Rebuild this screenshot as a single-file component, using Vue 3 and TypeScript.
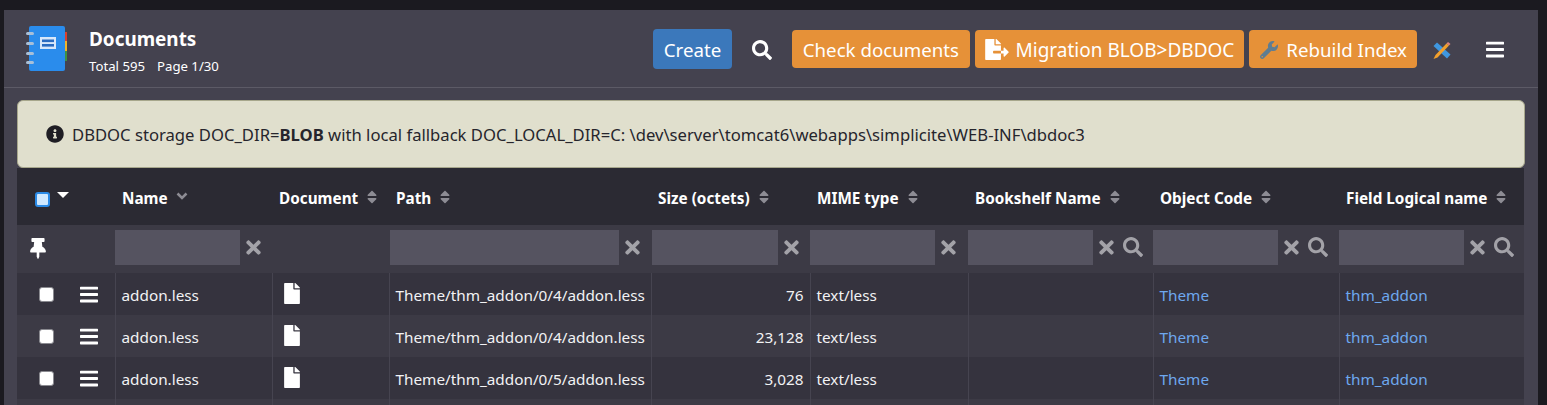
<template>
  <div class="page">
    <div class="panel">
      <header class="head">
        <svg class="logo" viewBox="0 0 40 45">
          <rect x="35" y="6" width="4" height="10" fill="#d9402f" />
          <rect x="35" y="15" width="4" height="10" fill="#f0b429" />
          <rect x="35" y="25" width="4" height="10" fill="#3f9142" />
          <rect x="1" y="0" width="36" height="45" rx="2" fill="#2a8cec" />
          <rect x="12" y="11" width="16" height="12" fill="#d7e8fa" />
          <rect x="14" y="13.500" width="12" height="2.600" fill="#2a6cc0" />
          <rect x="14" y="18" width="12" height="2.600" fill="#2a6cc0" />
          <rect v-for="y in [6, 16, 26, 35]" :key="y" x="-2" :y="y" width="8" height="3" rx="1.500" fill="#a9c0d8" />
        </svg>
        <div class="title-box">
          <div class="title">Documents</div>
          <div class="sub"><span>Total 595</span><span>Page 1/30</span></div>
        </div>
        <div class="actions">
          <button class="btn blue">Create</button>
          <svg class="search-top" :viewBox="icons.search.vb"><path :d="icons.search.d" /></svg>
          <button class="btn orange check">Check documents</button>
          <button class="btn orange migrate">
            <svg class="btn-ico" :viewBox="icons.fileExport.vb"><path :d="icons.fileExport.d" /></svg>
            Migration BLOB&gt;DBDOC
          </button>
          <button class="btn orange rebuild">
            <svg class="btn-ico wrench" :viewBox="icons.wrench.vb"><path :d="icons.wrench.d" /></svg>
            Rebuild Index
          </button>
          <svg class="tools" viewBox="0 0 18 18">
            <path d="M0.500 5 4 1.500 17.500 13.500 14 17.500Z" fill="#3f97e0" />
            <path d="M2.500 14 13.500 2.500 16 4.500 4.500 16.500 0.500 18Z" fill="#f2a02c" />
            <path d="M13.500 2.500 15 1 17.500 3 16 4.500Z" fill="#e0847a" />
          </svg>
          <svg class="bars-top" :viewBox="icons.bars.vb"><path :d="icons.bars.d" /></svg>
        </div>
      </header>

      <div class="alert">
        <svg class="info" :viewBox="icons.info.vb"><path :d="icons.info.d" /></svg>
        <span>DBDOC storage DOC_DIR=<b>BLOB</b> with local fallback DOC_LOCAL_DIR=C: \dev\server\tomcat6\webapps\simplicite\WEB-INF\dbdoc3</span>
      </div>

      <table class="grid">
        <colgroup>
          <col v-for="(w, i) in colWidths" :key="i" :style="{ width: w + 'px' }" />
        </colgroup>
        <thead>
          <tr class="titles">
            <th>
              <div class="sel-head">
                <span class="check-all"></span>
                <span class="caret"></span>
              </div>
            </th>
            <th v-for="c in columns" :key="c.label">
              <div class="th-in">
                {{ c.label }}
                <svg v-if="c.sorted" class="chev" viewBox="0 0 12 8"><path d="M1.500 1.500 6 6l4.500-4.500" /></svg>
                <svg v-else class="sort" :viewBox="icons.sort.vb"><path :d="icons.sort.d" /></svg>
              </div>
            </th>
          </tr>
          <tr class="filters">
            <th>
              <svg class="pin" :viewBox="icons.pin.vb"><path :d="icons.pin.d" /></svg>
            </th>
            <th v-for="c in columns" :key="c.label">
              <div v-if="c.input" class="filter" :class="{ nudged: c.nudged }">
                <input class="box" type="text" :style="{ width: c.input + 'px' }" />
                <svg class="clear" :viewBox="icons.times.vb"><path :d="icons.times.d" /></svg>
                <svg v-if="c.lookup" class="lookup" :viewBox="icons.search.vb"><path :d="icons.search.d" /></svg>
              </div>
            </th>
          </tr>
        </thead>
        <tbody>
          <tr v-for="(r, i) in rows" :key="i">
            <td>
              <div class="sel-row">
                <span class="check-row"></span>
                <svg class="bars" :viewBox="icons.bars.vb"><path :d="icons.bars.d" /></svg>
              </div>
            </td>
            <td>addon.less</td>
            <td class="doc"><svg class="file" :viewBox="icons.file.vb"><path :d="icons.file.d" /></svg></td>
            <td>{{ r.path }}</td>
            <td class="num">{{ r.size }}</td>
            <td>text/less</td>
            <td></td>
            <td class="link">Theme</td>
            <td class="link">thm_addon</td>
          </tr>
          <tr>
            <td v-for="w in colWidths" :key="w"></td>
          </tr>
        </tbody>
      </table>
    </div>
  </div>
</template>

<script setup lang="ts">
interface Column {
  label: string;
  sorted?: boolean;
  input?: number;
  lookup?: boolean;
  nudged?: boolean;
}

const icons = {
  search: {
    vb: "0 0 512 512",
    d: "M505 442.7L405.3 343c-4.500-4.500-10.600-7-17-7H372c27.600-35.300 44-79.700 44-128C416 93.100 322.900 0 208 0S0 93.100 0 208s93.100 208 208 208c48.300 0 92.700-16.400 128-44v16.300c0 6.400 2.500 12.500 7 17l99.700 99.700c9.400 9.400 24.600 9.400 33.900 0l28.300-28.300c9.400-9.400 9.400-24.600.1-34zM208 336c-70.700 0-128-57.200-128-128 0-70.700 57.200-128 128-128 70.700 0 128 57.200 128 128 0 70.700-57.200 128-128 128z",
  },
  times: {
    vb: "0 0 352 512",
    d: "M242.720 256l100.070-100.070c12.280-12.280 12.280-32.190 0-44.480l-22.240-22.240c-12.280-12.280-32.190-12.280-44.480 0L176 189.280 75.930 89.210c-12.280-12.280-32.190-12.280-44.480 0L9.210 111.450c-12.280 12.280-12.280 32.190 0 44.480L109.280 256 9.210 356.070c-12.280 12.280-12.280 32.190 0 44.480l22.240 22.240c12.280 12.280 32.200 12.280 44.480 0L176 322.720l100.070 100.070c12.280 12.280 32.200 12.280 44.480 0l22.240-22.240c12.280-12.280 12.280-32.190 0-44.480L242.720 256z",
  },
  bars: {
    vb: "0 0 448 512",
    d: "M16 132h416c8.837 0 16-7.163 16-16V76c0-8.837-7.163-16-16-16H16C7.163 60 0 67.163 0 76v40c0 8.837 7.163 16 16 16zm0 160h416c8.837 0 16-7.163 16-16v-40c0-8.837-7.163-16-16-16H16c-8.837 0-16 7.163-16 16v40c0 8.837 7.163 16 16 16zm0 160h416c8.837 0 16-7.163 16-16v-40c0-8.837-7.163-16-16-16H16c-8.837 0-16 7.163-16 16v40c0 8.837 7.163 16 16 16z",
  },
  file: {
    vb: "0 0 384 512",
    d: "M224 136V0H24C10.700 0 0 10.700 0 24v464c0 13.300 10.700 24 24 24h336c13.300 0 24-10.700 24-24V160H248c-13.200 0-24-10.800-24-24zm160-14.100v6.100H256V0h6.100c6.400 0 12.500 2.500 17 7l97.900 98c4.500 4.500 7 10.600 7 16.900z",
  },
  pin: {
    vb: "0 0 384 512",
    d: "M298.028 214.267L285.793 96H328c13.255 0 24-10.745 24-24V24c0-13.255-10.745-24-24-24H56C42.745 0 32 10.745 32 24v48c0 13.255 10.745 24 24 24h42.207L85.972 214.267C37.465 236.820 0 277.261 0 328c0 13.255 10.745 24 24 24h136v104.007c0 1.242.289 2.467.845 3.578l24 48c2.941 5.882 11.364 5.893 14.311 0l24-48a8.008 8.008 0 0 0 .845-3.578V352h136c13.255 0 24-10.745 24-24-.001-51.183-37.983-91.420-85.973-113.733z",
  },
  info: {
    vb: "0 0 512 512",
    d: "M256 8C119.043 8 8 119.083 8 256c0 136.997 111.043 248 248 248s248-111.003 248-248C504 119.083 392.957 8 256 8zm0 110c23.196 0 42 18.804 42 42s-18.804 42-42 42-42-18.804-42-42 18.804-42 42-42zm56 254c0 6.627-5.373 12-12 12h-88c-6.627 0-12-5.373-12-12v-24c0-6.627 5.373-12 12-12h12v-64h-12c-6.627 0-12-5.373-12-12v-24c0-6.627 5.373-12 12-12h64c6.627 0 12 5.373 12 12v100h12c6.627 0 12 5.373 12 12v24z",
  },
  fileExport: {
    vb: "0 0 576 512",
    d: "M384 121.900c0-6.300-2.500-12.400-7-16.900L279.100 7c-4.500-4.500-10.600-7-17-7H256v128h128zM571 308l-95.700-96.400c-10.100-10.100-27.400-3-27.400 11.300V288h-64v64h64v65.200c0 14.300 17.300 21.400 27.400 11.300L571 332c6.600-6.600 6.600-17.400 0-24zm-379 28v-32c0-8.800 7.200-16 16-16h176V160H248c-13.200 0-24-10.800-24-24V0H24C10.700 0 0 10.700 0 24v464c0 13.300 10.700 24 24 24h336c13.300 0 24-10.700 24-24V352H208c-8.800 0-16-7.200-16-16z",
  },
  wrench: {
    vb: "0 0 512 512",
    d: "M507.730 109.100c-2.240-9.030-13.540-12.090-20.120-5.510l-74.360 74.360-67.880-11.310-11.310-67.880 74.360-74.360c6.620-6.620 3.430-17.900-5.660-20.160-47.380-11.740-99.550.91-136.580 37.930-39.640 39.640-50.550 97.100-34.050 147.200L18.740 402.760c-24.990 24.990-24.990 65.510 0 90.500 24.990 24.990 65.510 24.990 90.500 0l213.210-213.210c50.120 16.710 107.470 5.680 147.370-34.220 37.070-37.070 49.700-89.320 37.910-136.730zM64 472c-13.250 0-24-10.750-24-24 0-13.260 10.750-24 24-24s24 10.740 24 24c0 13.250-10.750 24-24 24z",
  },
  sort: {
    vb: "0 0 320 512",
    d: "M41 288h238c21.400 0 32.100 25.900 17 41L177 448c-9.400 9.400-24.600 9.400-33.900 0L24 329c-15.100-15.100-4.400-41 17-41zm255-105L177 64c-9.400-9.400-24.600-9.400-33.900 0L24 183c-15.100 15.100-4.400 41 17 41h238c21.400 0 32.100-25.900 17-41z",
  },
};

const colWidths = [98, 157, 117, 262, 159, 158, 185, 186, 185];

const columns: Column[] = [
  { label: "Name", sorted: true, input: 125 },
  { label: "Document" },
  { label: "Path", input: 229, nudged: true },
  { label: "Size (octets)", input: 126, nudged: true },
  { label: "MIME type", input: 125 },
  { label: "Bookshelf Name", input: 125, lookup: true },
  { label: "Object Code", input: 125, lookup: true },
  { label: "Field Logical name", input: 125, lookup: true },
];

const rows = [
  { path: "Theme/thm_addon/0/4/addon.less", size: "76" },
  { path: "Theme/thm_addon/0/4/addon.less", size: "23,128" },
  { path: "Theme/thm_addon/0/5/addon.less", size: "3,028" },
];
</script>

<style>
html,
body {
  height: 405px;
  overflow: hidden;
  background: #1b1a20;
}
</style>

<style scoped>
.page {
  padding: 10px 9px 0 4px;
  font-family: "Noto Sans", sans-serif;
  color: #fff;
}

.panel {
  height: 395px;
  padding: 0 13px;
  overflow: hidden;
  background: #44424f;
}

.head {
  display: flex;
  align-items: center;
  height: 77px;
  margin: 0 -13px;
  padding: 0 34px 0 24px;
  border-bottom: 1px solid #5c5a66;
}

.logo {
  width: 40px;
  height: 45px;
  overflow: visible;
}

.title-box {
  margin: 3px 0 0 21px;
}

.title {
  font-size: 18.900px;
  font-weight: 700;
  line-height: 26px;
}

.sub {
  display: flex;
  gap: 12px;
  margin-top: 6px;
  font-size: 13.200px;
  line-height: 17px;
}

.actions {
  display: flex;
  align-items: center;
  margin-left: auto;
}

.btn {
  display: flex;
  align-items: center;
  gap: 7px;
  height: 38px;
  margin-left: 5px;
  padding: 2px 10px 0;
  border: 0;
  border-radius: 4px;
  font-family: inherit;
  font-size: 18.700px;
  color: #fff;
  white-space: nowrap;
}

.blue {
  height: 40px;
  margin-left: 0;
  padding: 2px 11px 0;
  background: #3b78bb;
}

.orange {
  background: #e69138;
}

.check {
  margin-left: 20px;
  padding: 2px 10.500px 0;
}

.migrate {
  font-size: 19px;
}

.rebuild {
  gap: 8px;
  padding-left: 11px;
}

.search-top {
  width: 20px;
  height: 20px;
  margin: 2px 0 0 20px;
  fill: #fff;
}

.btn-ico {
  width: 24px;
  height: 21px;
  fill: #fff;
}

.btn-ico.wrench {
  width: 18px;
  height: 18px;
  fill: #5f7d92;
}

.tools {
  width: 18px;
  height: 18px;
  margin-left: 16px;
  margin-top: 2px;
}

.bars-top {
  width: 18px;
  height: 21px;
  margin: 2px 0 0 35px;
  fill: #fff;
}

.alert {
  display: flex;
  align-items: center;
  gap: 8px;
  box-sizing: border-box;
  height: 68px;
  margin: 12px 0 0;
  padding-left: 28px;
  border: 1px solid #a7a78c;
  border-radius: 6px;
  background: #e0dfcd;
  font-size: 16.650px;
  color: #26252c;
}

.info {
  width: 18px;
  height: 18px;
  fill: #1f1e24;
}

.grid {
  width: 1507px;
  table-layout: fixed;
  border-collapse: collapse;
}

.grid th,
.grid td {
  box-sizing: border-box;
  padding: 0;
  text-align: left;
}

.titles th {
  height: 57px;
  padding: 2px 0 0 7px;
  background: #2b2a33;
  font-size: 15.300px;
  font-weight: 700;
}

.th-in {
  display: flex;
  align-items: center;
  gap: 8px;
  white-space: nowrap;
}

.sel-head {
  display: flex;
  align-items: center;
  gap: 7px;
  padding-left: 11px;
}

.check-all {
  box-sizing: border-box;
  width: 15px;
  height: 15px;
  border: 2px solid #2a8ae6;
  border-radius: 3px;
  background: #cfe8ff;
  margin-top: 3px;
}

.caret {
  width: 0;
  height: 0;
  border-left: 6px solid transparent;
  border-right: 6px solid transparent;
  border-top: 6px solid #fff;
  margin-top: -6px;
}

.sort {
  width: 12px;
  height: 16px;
  margin-top: -2px;
  fill: #8d8c94;
}

.chev {
  width: 12px;
  height: 8px;
  margin-top: -4px;
  fill: none;
  stroke: #8d8c94;
  stroke-width: 2.500;
}

.filters th {
  height: 48px;
  padding-bottom: 4px;
  background: #3c3a45;
  vertical-align: middle;
}

.pin {
  display: block;
  width: 16px;
  height: 21px;
  margin: 2px 0 0 13px;
  fill: #fff;
}

.filter {
  display: flex;
  align-items: center;
}

.nudged {
  padding-left: 1px;
}

.box {
  box-sizing: border-box;
  height: 35px;
  padding: 0;
  border: 0;
  background: #555360;
}

.clear {
  width: 15px;
  height: 21px;
  margin-left: 6px;
  fill: #a3a2a8;
}

.lookup {
  width: 20px;
  height: 20px;
  margin-left: 9px;
  fill: #a3a2a8;
}

.grid td {
  height: 42px;
  padding: 2px 0 0 6px;
  border-left: 1px solid #464450;
  font-size: 15.300px;
  color: #f2f2f4;
  white-space: nowrap;
  overflow: hidden;
}

.grid td:first-child {
  border-left: 0;
  padding: 0;
}

tbody tr:nth-child(odd) td {
  background: #35333e;
}

tbody tr:nth-child(even) td {
  background: #3c3a45;
}

.sel-row {
  display: flex;
  align-items: center;
  gap: 26px;
  padding-left: 22px;
}

.check-row {
  box-sizing: border-box;
  width: 15px;
  height: 15px;
  border: 1px solid #8a8a90;
  border-radius: 3px;
  background: #fff;
}

.bars {
  width: 18px;
  height: 21px;
  fill: #fff;
}

.doc {
  padding-left: 11px !important;
  padding-top: 0 !important;
}

.file {
  display: block;
  width: 16px;
  height: 21px;
  margin-top: -2px;
  fill: #fff;
}

.num {
  padding-right: 6px !important;
  text-align: right !important;
}

.grid td.link {
  color: #6ea8ee;
}
</style>
